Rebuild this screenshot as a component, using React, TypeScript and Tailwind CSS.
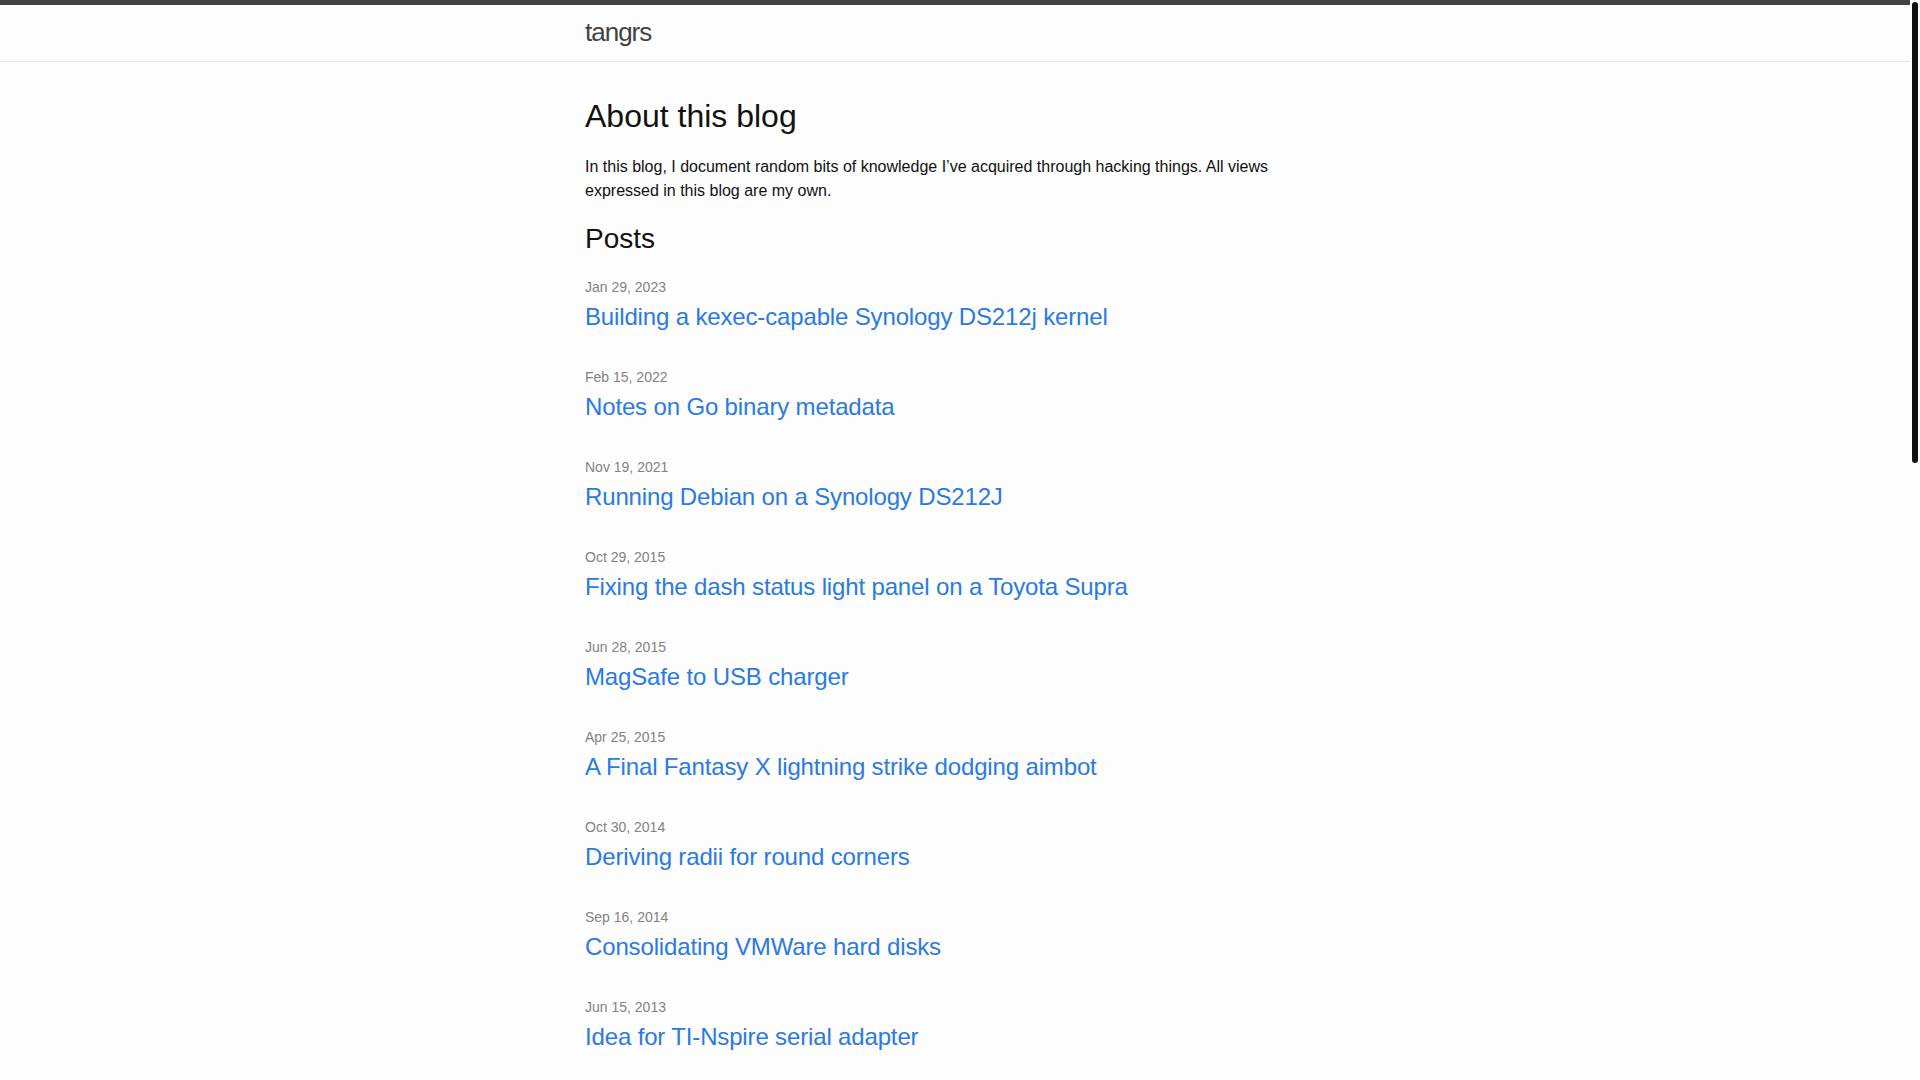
const posts = [
  { date: "Jan 29, 2023", title: "Building a kexec-capable Synology DS212j kernel" },
  { date: "Feb 15, 2022", title: "Notes on Go binary metadata" },
  { date: "Nov 19, 2021", title: "Running Debian on a Synology DS212J" },
  { date: "Oct 29, 2015", title: "Fixing the dash status light panel on a Toyota Supra" },
  { date: "Jun 28, 2015", title: "MagSafe to USB charger" },
  { date: "Apr 25, 2015", title: "A Final Fantasy X lightning strike dodging aimbot" },
  { date: "Oct 30, 2014", title: "Deriving radii for round corners" },
  { date: "Sep 16, 2014", title: "Consolidating VMWare hard disks" },
  { date: "Jun 15, 2013", title: "Idea for TI-Nspire serial adapter" },
];

export default function App() {
  return (
    <div className="flex h-screen overflow-hidden bg-[#fdfdfd] text-[#111] text-[16px] leading-[1.5] font-['Liberation_Sans',Arial,sans-serif]">
      <div className="flex-1 min-w-0">
        <header className="border-t-[5px] border-t-[#424242] border-b border-b-[#e8e8e8] min-h-[62px]">
          <div className="max-w-[800px] mx-auto px-[30px]">
            <a href="#" className="inline-block text-[26px] font-light leading-[54px] tracking-[-1px] text-[#424242]">
              tangrs
            </a>
          </div>
        </header>

        <main className="py-[30px]">
          <div className="max-w-[800px] mx-auto px-[30px]">
            <h1 className="text-[32px] leading-[48px] font-normal mb-[15px]">About this blog</h1>
            <p className="mb-[15px]">
              In this blog, I document random bits of knowledge I’ve acquired through hacking things. All views
              expressed in this blog are my own.
            </p>

            <h2 className="text-[28px] leading-[42px] font-normal mb-[15px]">Posts</h2>
            <ul>
              {posts.map((p) => (
                <li key={p.title} className="mb-[30px]">
                  <span className="text-[14px] text-[#828282]">{p.date}</span>
                  <h3>
                    <a href="#" className="block text-[24px] leading-[36px] tracking-[-0.15px] text-[#2a7ae2]">
                      {p.title}
                    </a>
                  </h3>
                </li>
              ))}
            </ul>
          </div>
        </main>
      </div>

      {/* scrollbar */}
      <div className="w-[10px] shrink-0 pt-[2px]">
        <div className="mx-[2px] h-[461px] rounded-full bg-[#111]" />
      </div>
    </div>
  );
}
